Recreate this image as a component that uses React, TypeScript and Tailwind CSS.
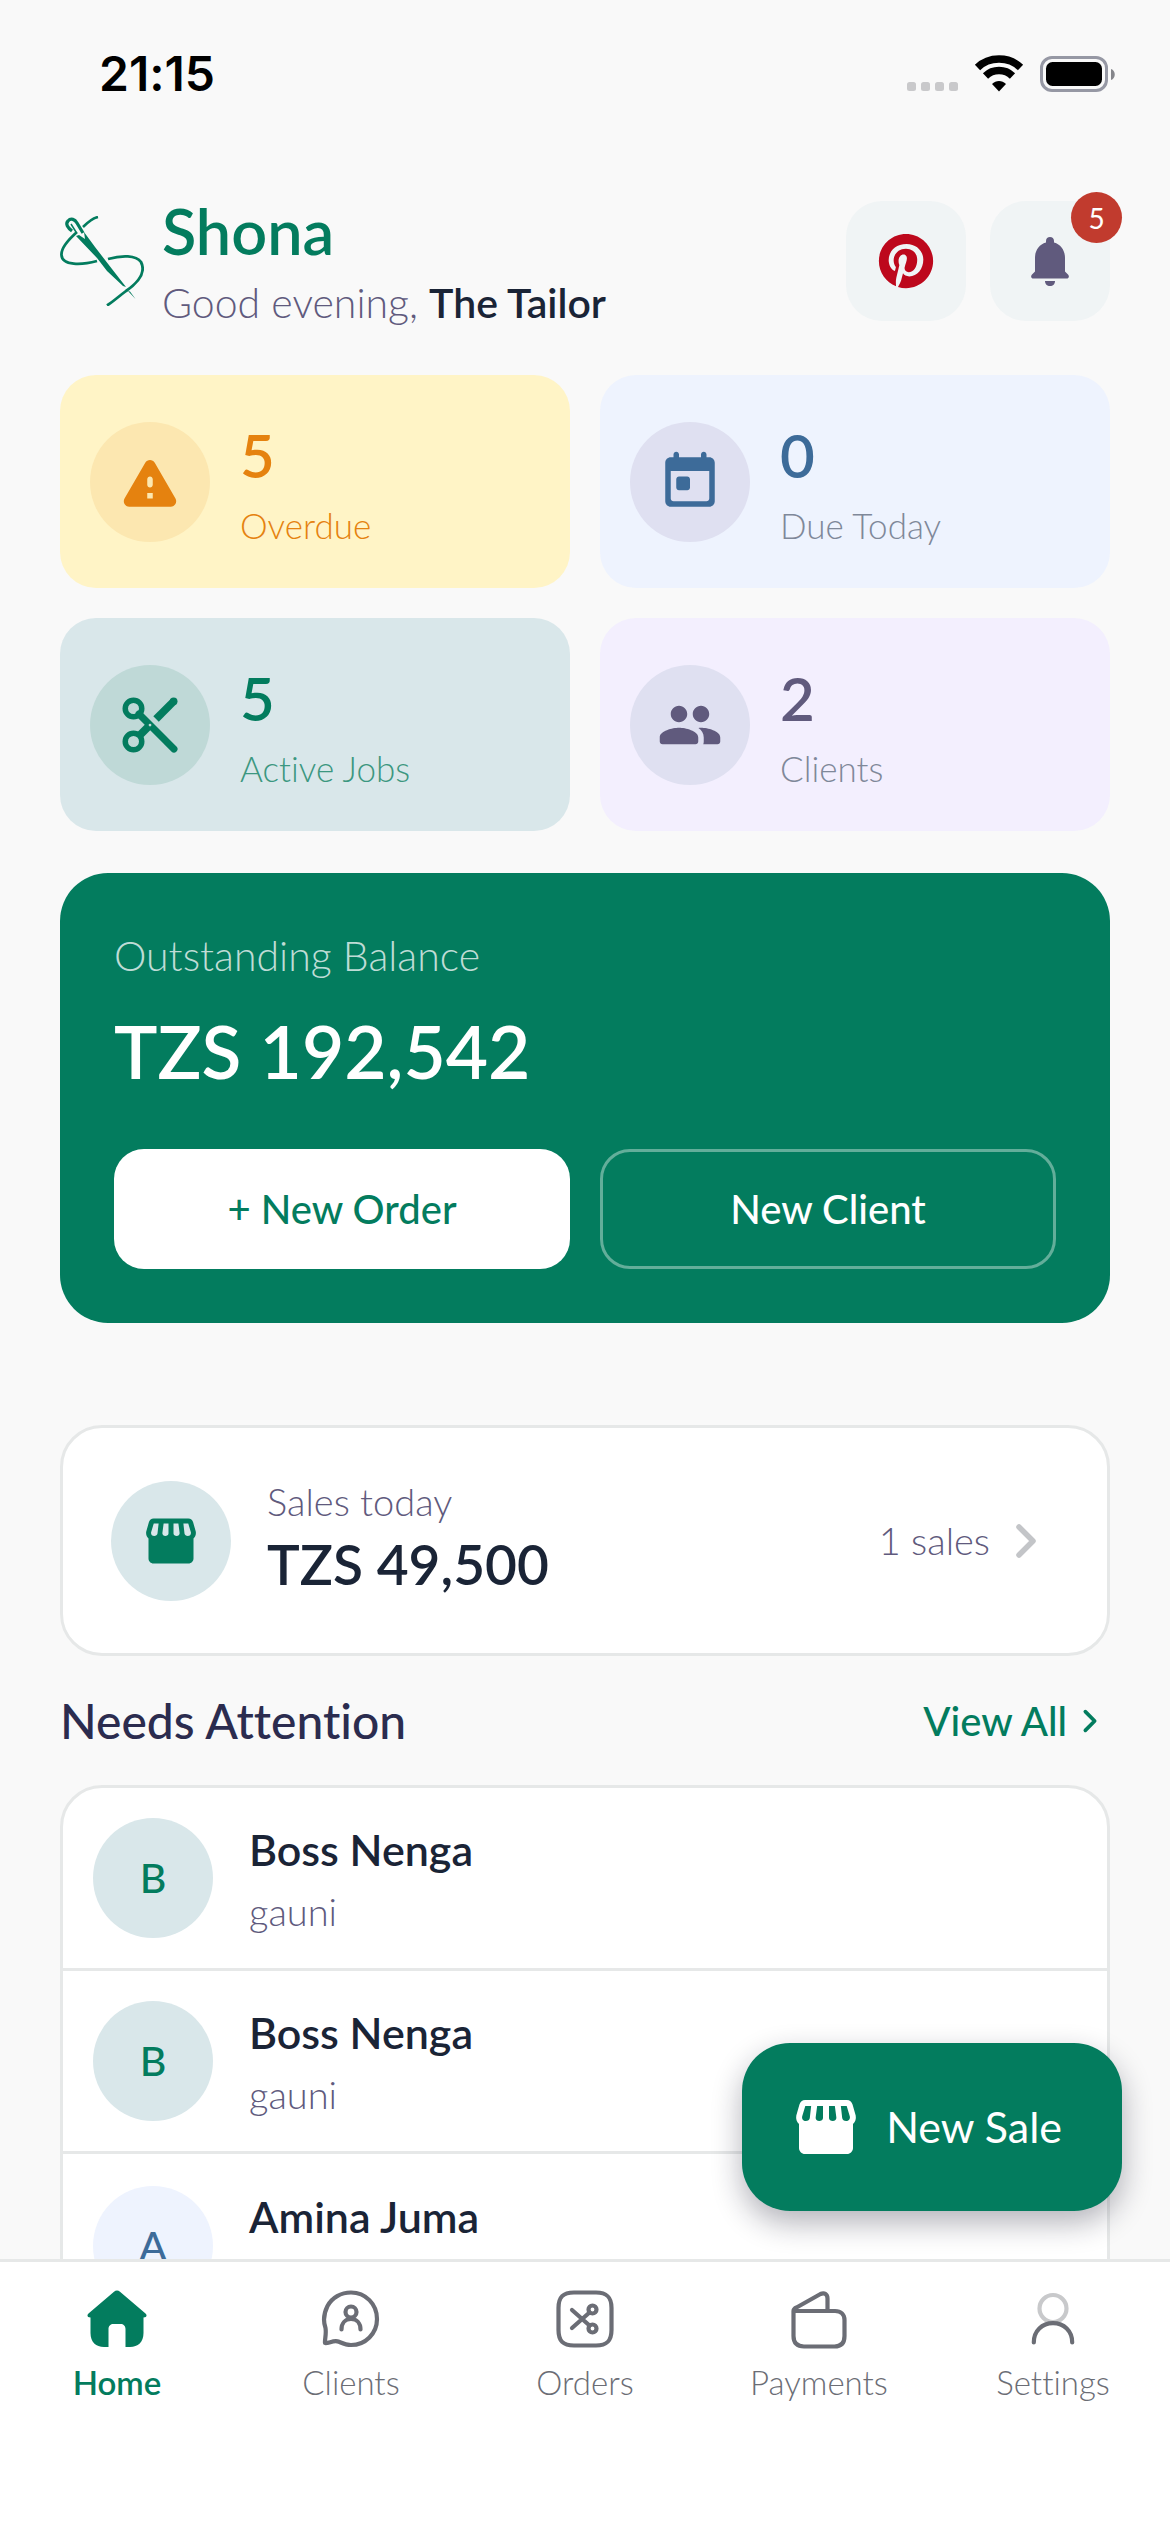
import type { ReactNode } from 'react';
import { FaPinterest } from 'react-icons/fa';

interface StatCardProps {
  value: number;
  label: string;
  card: string;
  badge: string;
  valueColor: string;
  labelColor: string;
  icon: ReactNode;
}

const attention = [
  { id: 1, name: 'Boss Nenga', item: 'gauni', avatar: 'bg-[#d9e7ea] text-[#037c5e]' },
  { id: 2, name: 'Boss Nenga', item: 'gauni', avatar: 'bg-[#d9e7ea] text-[#037c5e]' },
  { id: 3, name: 'Amina Juma', item: 'gauni', avatar: 'bg-[#eef3fe] text-[#3d6b99]' },
];

function NeedleLogo() {
  return (
    <svg viewBox="0 0 84 90" className="h-[90px] w-[84px] shrink-0" fill="none" stroke="#037c5e" aria-hidden="true">
      <path d="M38 1C33 2 28 6 23 11" strokeWidth="2.6" />
      <path d="M17 16C8 24 1 33 1.500 39C2 50 22 49 37 45" strokeWidth="2.8" />
      <path d="M48 43C62 39 76 39 81 46C86 56 79 66 66 75C58 81 54 85 47 89.500" strokeWidth="2.8" />
      <path d="M12 15C8 12 5 8 8 5C11 1.500 15 3.500 17 7L23 17" strokeWidth="3.2" />
      <path d="M11 8L16 16" strokeWidth="1.500" />
      <path d="M16 20L19 19L25 23L24 16L35 31L52 53L66 71L63 70L47 55L37 42Z" fill="#037c5e" stroke="none" />
      <path d="M68 75L70 75.500L75.500 83Z" fill="#037c5e" stroke="none" />
    </svg>
  );
}

function WarningIcon() {
  return (
    <svg viewBox="0 0 24 24" className="size-[66px]" fill="currentColor" aria-hidden="true">
      <path d="M4.470 21h15.060c1.540 0 2.500-1.670 1.730-3L13.730 4.990c-.77-1.330-2.690-1.330-3.460 0L2.740 18c-.77 1.330.19 3 1.730 3zM12 14c-.55 0-1-.45-1-1v-2c0-.55.45-1 1-1s1 .45 1 1v2c0 .55-.45 1-1 1zm1 4h-2v-2h2v2z" />
    </svg>
  );
}

function CalendarIcon() {
  return (
    <svg viewBox="0 0 24 24" className="size-[66px]" fill="currentColor" aria-hidden="true">
      <path d="M19 3h-1V2c0-.55-.45-1-1-1s-1 .45-1 1v1H8V2c0-.55-.45-1-1-1s-1 .45-1 1v1H5c-1.110 0-2 .9-2 2v14c0 1.100.89 2 2 2h14c1.100 0 2-.9 2-2V5c0-1.100-.9-2-2-2zm-1 16H6c-.55 0-1-.45-1-1V8h14v10c0 .55-.45 1-1 1zM8 10h3c.55 0 1 .45 1 1v3c0 .55-.45 1-1 1H8c-.55 0-1-.45-1-1v-3c0-.55.45-1 1-1z" />
    </svg>
  );
}

function ScissorsIcon() {
  return (
    <svg viewBox="0 0 24 24" className="size-[66px]" fill="none" stroke="currentColor" aria-hidden="true">
      <circle cx="6" cy="6" r="3" strokeWidth="2" />
      <circle cx="6" cy="18" r="3" strokeWidth="2" />
      <path d="M8 8L20.700 20.700" strokeWidth="2.600" strokeLinecap="round" />
      <path d="M8 16L12 12" strokeWidth="2.800" />
      <path d="M14.200 9.800L20.600 3.400" strokeWidth="2.800" />
      <circle cx="20.600" cy="3.400" r="1.400" fill="currentColor" stroke="none" />
      <circle cx="12" cy="12" r="0.5" fill="#bfd9d7" stroke="none" />
    </svg>
  );
}

function PeopleIcon() {
  return (
    <svg viewBox="0 0 24 24" className="size-[66px]" fill="currentColor" aria-hidden="true">
      <path d="M16 11c1.660 0 2.990-1.340 2.990-3S17.660 5 16 5s-3 1.340-3 3 1.340 3 3 3zm-8 0c1.660 0 2.990-1.340 2.990-3S9.660 5 8 5 5 6.340 5 8s1.340 3 3 3zm0 2c-2.330 0-7 1.170-7 3.500V18c0 .55.45 1 1 1h12c.55 0 1-.45 1-1v-1.500c0-2.330-4.670-3.500-7-3.500zm8 0c-.29 0-.62.02-.97.05.02.01.03.03.04.04 1.140.83 1.930 1.940 1.930 3.410V18c0 .35-.07.69-.18 1H22c.55 0 1-.45 1-1v-1.500c0-2.330-4.670-3.500-7-3.500z" />
    </svg>
  );
}

function StoreIcon({ className }: { className: string }) {
  return (
    <svg viewBox="0 0 24 24" className={className} fill="currentColor" fillRule="evenodd" aria-hidden="true">
      <path d="M21.900 8.200L20.850 4.520C20.600 3.600 19.900 3 18.940 3H5.050C4.100 3 3.400 3.600 3.150 4.520L2.100 8.200C1.900 9.300 2.200 10.300 3 11V19c0 1.100.9 2 2 2h14c1.100 0 2-.9 2-2V11C21.800 10.300 22.100 9.300 21.900 8.200zM5.100 5H7.050L6.600 9C6.500 9.600 6 10 5.300 10C4.400 10 3.900 9.300 4.050 8.500zM9.050 5H11V9C11 9.600 10.400 10 9.750 10C9 10 8.500 9.500 8.550 8.800zM13 5H14.950L15.450 8.800C15.500 9.500 15 10 14.250 10C13.600 10 13 9.600 13 9zM16.950 5H18.900L19.950 8.500C20.100 9.300 19.600 10 18.700 10C18 10 17.500 9.600 17.400 9z" />
    </svg>
  );
}

function BellIcon() {
  return (
    <svg viewBox="0 0 38 49" className="h-[49px] w-[38px]" fill="#605a7d" aria-hidden="true">
      <path d="M15 5.500V4C15 1.500 16.700 0 19 0s4 1.500 4 4v1.500C30 7.500 34 13.500 34 21v13.500l3 3c1.700 1.800.8 4-1.500 4h-33c-2.300 0-3.200-2.200-1.500-4l3-3V21C4 13.500 8 7.500 15 5.500z" />
      <path d="M14 44h10c0 3-2 5-5 5s-5-2-5-5z" />
    </svg>
  );
}

function ChevronIcon({ className, strokeWidth }: { className: string; strokeWidth: number }) {
  return (
    <svg viewBox="0 0 24 36" className={className} fill="none" stroke="currentColor" strokeWidth={strokeWidth} strokeLinecap="round" strokeLinejoin="round" aria-hidden="true">
      <path d="M5 4L19 18L5 32" />
    </svg>
  );
}

function StatusBar() {
  return (
    <div className="flex h-[147px] shrink-0 items-center justify-between pl-[99px] pr-[54px]">
      <span className="font-['Inter'] text-[48px] leading-[54px] font-semibold text-black">21:15</span>
      <svg viewBox="0 0 210 40" className="h-[40px] w-[210px]" aria-label="Wi-Fi connected, battery full">
        <g fill="#c9c9cb">
          <rect x="1" y="28" width="9" height="9" rx="2.500" />
          <rect x="15" y="28" width="9" height="9" rx="2.500" />
          <rect x="29" y="28" width="9" height="9" rx="2.500" />
          <rect x="43" y="28" width="9" height="9" rx="2.500" />
        </g>
        <g fill="none" stroke="#000" strokeWidth="7.500">
          <path d="M71.500 13.500C83 2.200 103 2.200 114.500 13.500" />
          <path d="M79.500 22C87 14.800 99 14.800 106.500 22" />
        </g>
        <path d="M93 37.500L86 30C90 26 96 26 100 30Z" />
        <rect x="135.500" y="3.500" width="65" height="33" rx="10.500" fill="none" stroke="#9698a4" strokeWidth="3" />
        <rect x="140" y="8" width="56" height="24" rx="6.500" />
        <path d="M205 15C210 16.500 210 24.500 205 26Z" fill="#85868b" />
      </svg>
    </div>
  );
}

function StatCard({ value, label, card, badge, valueColor, labelColor, icon }: StatCardProps) {
  return (
    <div className={`flex h-[213px] items-center gap-[30px] rounded-[36px] px-[30px] ${card}`}>
      <div className={`flex size-[120px] items-center justify-center rounded-full ${badge} ${valueColor}`}>{icon}</div>
      <div className="pt-1">
        <p className={`text-[60px] leading-[78px] font-semibold ${valueColor}`}>{value}</p>
        <p className={`mt-1 text-[35px] leading-[54px] font-light ${labelColor}`}>{label}</p>
      </div>
    </div>
  );
}

function TabItem({ label, active, children }: { label: string; active?: boolean; children: ReactNode }) {
  return (
    <a
      href="#"
      className={`flex flex-1 flex-col items-center gap-[9px] text-[33px] leading-[48px] ${
        active ? 'font-semibold text-[#037c5e]' : 'font-light text-[#6b6d75]'
      }`}
    >
      <svg viewBox="0 0 60 60" className="size-[60px]" fill="none" stroke="currentColor" strokeWidth="4.200" strokeLinecap="round" strokeLinejoin="round" aria-hidden="true">
        {children}
      </svg>
      {label}
    </a>
  );
}

export default function App() {
  return (
    <div className="relative flex h-screen flex-col overflow-hidden bg-[#f9f9f9] font-['Lato',sans-serif] text-[#1a2436] [font-variant-ligatures:none]">
      <StatusBar />

      <main className="min-h-0 flex-1 overflow-y-auto px-[60px] pt-[54px] [scrollbar-width:none]">
        <header className="mb-[54px] flex h-[120px] items-center justify-between">
          <div className="flex items-center gap-[18px]">
            <NeedleLogo />
            <div className="pt-3">
              <h1 className="text-[63px] leading-[72px] font-semibold text-[#037c5e]">Shona</h1>
              <p className="text-[41px] leading-[72px] font-light text-[#605a7d]">
                Good evening, <strong className="font-semibold text-[#1a2436]">The Tailor</strong>
              </p>
            </div>
          </div>
          <div className="flex gap-6">
            <button type="button" aria-label="Pinterest" className="flex size-[120px] items-center justify-center rounded-[36px] bg-[#f0f4f5]">
              <FaPinterest className="size-[56px] text-[#bd081c]" />
            </button>
            <button type="button" aria-label="Notifications, 5 unread" className="relative flex size-[120px] items-center justify-center rounded-[36px] bg-[#f0f4f5]">
              <BellIcon />
              <span className="absolute -top-[9px] -right-3 flex size-[51px] items-center justify-center rounded-full bg-[#c13b2e] text-[28px] text-white">
                5
              </span>
            </button>
          </div>
        </header>

        <section className="grid grid-cols-2 gap-[30px]">
          <StatCard value={5} label="Overdue" card="bg-[#fff4c6]" badge="bg-[#fce7b0]" valueColor="text-[#e5820f]" labelColor="text-[#e5820f]" icon={<WarningIcon />} />
          <StatCard value={0} label="Due Today" card="bg-[#eef3fe]" badge="bg-[#dfe0f1]" valueColor="text-[#3d6b99]" labelColor="text-[#7f8899]" icon={<CalendarIcon />} />
          <StatCard value={5} label="Active Jobs" card="bg-[#d9e7ea]" badge="bg-[#bfd9d7]" valueColor="text-[#037c5e]" labelColor="text-[#3c9780]" icon={<ScissorsIcon />} />
          <StatCard value={2} label="Clients" card="bg-[#f3effe]" badge="bg-[#dfe0f1]" valueColor="text-[#605a7d]" labelColor="text-[#7f8899]" icon={<PeopleIcon />} />
        </section>

        <section className="mt-[42px] rounded-[48px] bg-[#037c5e] p-[54px]">
          <p className="text-[41px] leading-[57px] font-light text-[#bfdcd6]">Outstanding Balance</p>
          <p className="mt-[18px] text-[73px] leading-[99px] font-semibold text-white">TZS 192,542</p>
          <div className="mt-12 grid grid-cols-2 gap-[30px]">
            <button type="button" className="h-[120px] rounded-[30px] bg-white text-[40px] font-medium text-[#037c5e]">
              + New Order
            </button>
            <button type="button" className="h-[120px] rounded-[30px] border-3 border-[#63ae9a] text-[40px] font-medium text-white">
              New Client
            </button>
          </div>
        </section>

        <button type="button" className="mt-[102px] flex h-[231px] w-full items-center rounded-[42px] border-3 border-[#e6e8e8] bg-white px-12 text-left">
          <span className="flex size-[120px] items-center justify-center rounded-full bg-[#d9e7ea] text-[#037c5e]">
            <StoreIcon className="size-[60px]" />
          </span>
          <span className="ml-9 flex flex-1 flex-col pb-[9px]">
            <span className="text-[38px] leading-[57px] font-light text-[#605a7d]">Sales today</span>
            <span className="text-[55px] leading-[69px] font-semibold">TZS 49,500</span>
          </span>
          <span className="text-[38px] font-light text-[#605a7d]">1 sales</span>
          <ChevronIcon className="ml-6 mr-[21px] h-[36px] w-6 text-[#c3c5c8]" strokeWidth={5.5} />
        </button>

        <div className="flex items-center justify-between py-[30px]">
          <h2 className="text-[48px] leading-[69px] font-medium text-[#2b2c4f]">Needs Attention</h2>
          <a href="#" className="flex items-center gap-[15px] pr-3 text-[40px] font-medium text-[#037c5e]">
            View All
            <ChevronIcon className="h-6 w-4" strokeWidth={5.5} />
          </a>
        </div>

        <ul className="divide-y-3 divide-[#e6e8e8] rounded-[42px] border-3 border-[#e6e8e8] bg-white">
          {attention.map((row) => (
            <li key={row.id} className="flex h-[183px] items-center gap-9 px-[30px]">
              <span className={`flex size-[120px] items-center justify-center rounded-full text-[41px] font-medium ${row.avatar}`}>
                {row.name[0]}
              </span>
              <div>
                <p className="text-[43px] leading-[66px] font-semibold">{row.name}</p>
                <p className="text-[38px] leading-[57px] font-light text-[#605a7d]">{row.item}</p>
              </div>
            </li>
          ))}
        </ul>
      </main>

      <button
        type="button"
        className="absolute right-12 bottom-[321px] flex h-[168px] items-center gap-6 rounded-[48px] bg-[#037c5e] pr-[60px] pl-12 text-[43px] text-white shadow-[0_12px_30px_rgba(20,20,40,0.32)]"
      >
        <StoreIcon className="size-[72px]" />
        New Sale
      </button>

      <nav className="relative flex h-[273px] shrink-0 border-t-3 border-[#e6e8e8] bg-white pt-[27px]">
        <TabItem label="Home" active>
          <path
            d="M27 2.800C28.800 1.200 31.200 1.200 33 2.800L58.500 24.500C60.500 26.500 59.500 28.500 56.500 28.500V44C56.500 53 51 58 43 58H38.500V40C38.500 37 36.500 35 33.500 35H26.500C23.500 35 21.500 37 21.500 40V58H17C9 58 3.500 53 3.500 44V28.500C.5 28.500-.5 26.500 1.500 24.500Z"
            fill="currentColor"
            stroke="none"
          />
        </TabItem>
        <TabItem label="Clients">
          <path d="M4 54C3.600 50 5.500 46 4.500 39C2 32 3 24 6.500 17C11 8.500 20 3.500 30 3.500C44.500 3.500 56 15 56 30C56 44.500 44.500 56 30 56C25 56 22 54.500 18 52.800C13 50.600 8 54.500 4 54Z" />
          <circle cx="30" cy="23" r="5.500" />
          <path d="M20.500 40.500C20.500 34 24.500 30 30 30S39.500 34 39.500 40.500" />
        </TabItem>
        <TabItem label="Orders">
          <path d="M19 3.500H41C52 3.500 56.500 8 56.500 19V41C56.500 52 52 56.500 41 56.500H19C8 56.500 3.500 52 3.500 41V19C3.500 8 8 3.500 19 3.500Z" />
          <circle cx="37.500" cy="20.500" r="4" />
          <circle cx="37.500" cy="39.500" r="4" />
          <path d="M34.500 23.500L17 39M34.500 36.500L17 21" />
        </TabItem>
        <TabItem label="Payments">
          <path d="M4.500 22H46C52 22 55.500 25.500 55.500 31V47C55.500 54 52 57.500 45.500 57.500H15C8 57.500 4.500 54 4.500 47V22C4.500 20.500 5.500 19.500 7.500 18.500L31.500 5C35.500 3 38.500 5.500 38.500 9.500V22" />
        </TabItem>
        <TabItem label="Settings">
          <circle cx="30" cy="19.500" r="13.500" stroke="#c8c9cb" />
          <path d="M10.800 53.500C10.800 42 19 34.200 30 34.200S49.200 42 49.200 53.500" />
        </TabItem>
      </nav>
    </div>
  );
}
